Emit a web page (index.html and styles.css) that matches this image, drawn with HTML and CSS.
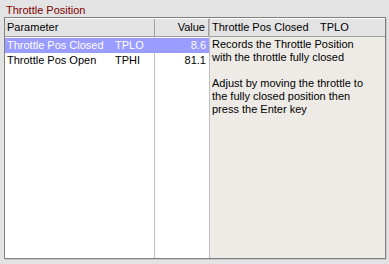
FILE: index.html
```html
<!DOCTYPE html>
<html lang="en">

<head>
  <meta charset="UTF-8">
  <title>Throttle Position</title>
  <link rel="stylesheet" href="styles.css">
</head>

<body>
  <h1 class="title">Throttle Position</h1>
  <div class="frame">
    <div class="list">
      <div class="list-head">
        <span class="col-name">Parameter</span>
        <span class="col-value">Value</span>
      </div>
      <div class="list-body">
        <div class="row selected">
          <span class="col-name"><span class="pname">Throttle Pos Closed</span><span class="pcode">TPLO</span></span>
          <span class="col-value">8.6</span>
        </div>
        <div class="row">
          <span class="col-name"><span class="pname">Throttle Pos Open</span><span class="pcode">TPHI</span></span>
          <span class="col-value">81.1</span>
        </div>
      </div>
    </div>
    <div class="info">
      <div class="info-head">
        <span class="pname">Throttle Pos Closed</span><span>TPLO</span>
      </div>
      <div class="info-body">
        <p>Records the Throttle Position<br>with the throttle fully closed</p>
        <p>Adjust by moving the throttle to<br>the fully closed position then<br>press the Enter key</p>
      </div>
    </div>
  </div>
</body>

</html>
```

FILE: styles.css
```css
* {
  margin: 0;
  padding: 0;
  box-sizing: border-box;
}

body {
  width: 389px;
  height: 264px;
  background: #e3e3e3;
  font-family: "Liberation Sans", Arial, sans-serif;
  font-size: 11px;
  color: #000;
  padding: 2px 3px 0 4px;
}

/* Titulo del panel */
.title {
  font-size: 11px;
  font-weight: normal;
  color: #800000;
  height: 15px;
  line-height: 16px;
  padding-left: 2px;
}

/* Marco principal */
.frame {
  display: grid;
  grid-template-columns: 205px 1fr;
  height: 242px;
  border: 1px solid #808080;
  box-shadow: 1px 1px 0 #c8c8c8;
  background: #fff;
}

.list {
  display: flex;
  flex-direction: column;
  border-right: 1px solid #c0c0c0;
}

.list-head,
.info-head {
  display: flex;
  height: 19px;
  line-height: 17px;
  background: #e3e3e3;
  border-bottom: 1px solid #a0a0a0;
  border-top: 1px solid #fff;
  white-space: nowrap;
}

.list-head .col-name,
.list-head .col-value {
  border-right: 1px solid #a0a0a0;
}

.col-name {
  width: 150px;
  padding-left: 2px;
  display: flex;
  white-space: nowrap;
}

.col-value {
  flex: 1;
  text-align: right;
  padding-right: 3px;
}

.list-body {
  flex: 1;
  display: flex;
  flex-direction: column;
  background: linear-gradient(to right, transparent 149px, #c0c0c0 149px, #c0c0c0 150px, transparent 150px);
  padding-top: 1px;
}

.row {
  display: flex;
  height: 15px;
  line-height: 15px;
}

.row .col-name {
  padding-left: 2px;
}

.row.selected {
  background: #9a9cff;
  color: #fff;
}

.pname {
  width: 108px;
}

.info {
  display: flex;
  flex-direction: column;
  background: #eeebe6;
}

.info-head {
  padding-left: 2px;
}

.info-head .pname {
  width: 108px;
}

.info-body {
  padding: 1px 0 0 2px;
  line-height: 13px;
}

.info-body p {
  margin-bottom: 13px;
}
```
